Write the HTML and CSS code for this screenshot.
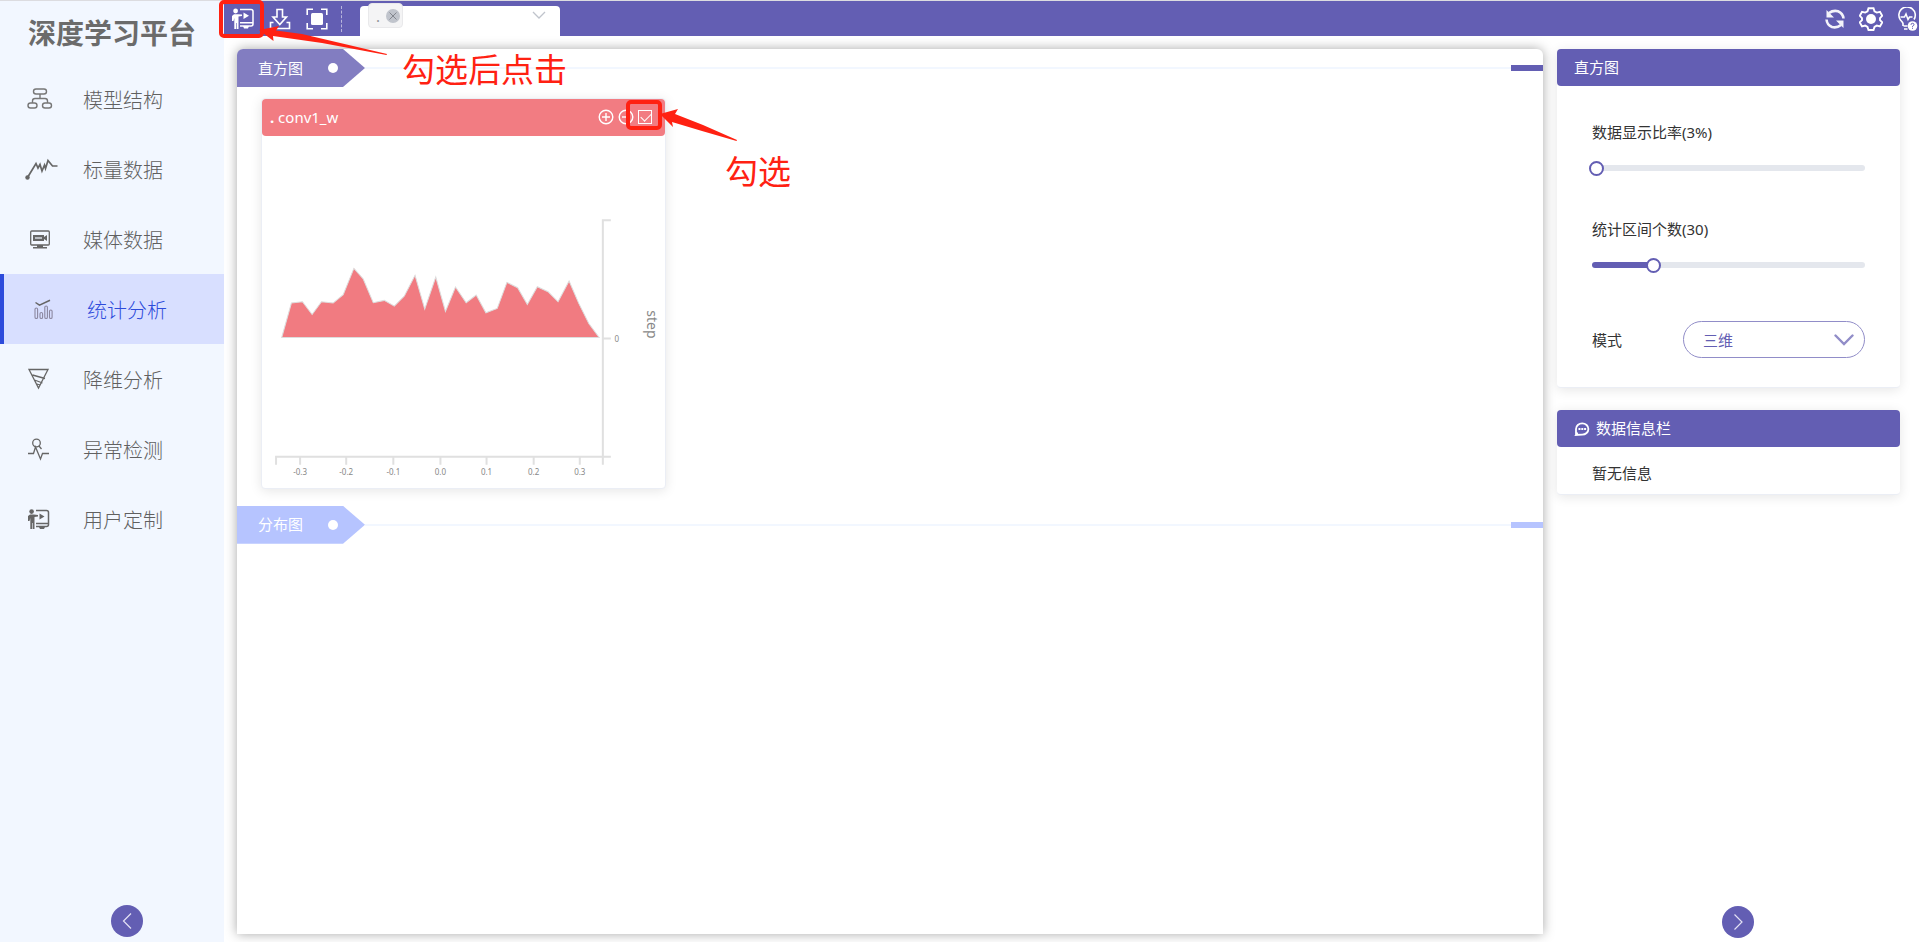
FILE: index.html
```html
<!DOCTYPE html>
<html lang="zh-CN">
<head>
<meta charset="utf-8">
<title>深度学习平台</title>
<link rel="stylesheet" href="styles.css">
</head>
<body>
<div class="app">
  <aside class="sidebar">
    <h1 class="logo">深度学习平台</h1>
    <nav class="menu">
      <a class="menu-item" href="#">
        <svg class="menu-icon" viewBox="0 0 34 24"><g fill="none" stroke="#777" stroke-width="1.4"><rect x="9.500" y="2" width="13" height="5" rx="2.500"/><rect x="4" y="16" width="9" height="5" rx="2.500"/><rect x="18.500" y="16" width="9" height="5" rx="2.500"/><path d="M16 7v4.500M8.500 16v-2q0-2.500 2.500-2.500h10q2.500 0 2.500 2.500v2"/></g></svg>
        <span>模型结构</span></a>
      <a class="menu-item" href="#">
        <svg class="menu-icon" viewBox="0 0 34 24"><circle cx="3.500" cy="20.500" r="2.200" fill="#666"/><path d="M3.500 20.500l8.500-14 2 4.500 2-3.500 2 6.500 2.500-6 1 3.500L24 3.500l4.500 5.500h5" fill="none" stroke="#666" stroke-width="1.700"/></svg>
        <span>标量数据</span></a>
      <a class="menu-item" href="#">
        <svg class="menu-icon" viewBox="0 0 34 24"><rect x="6.700" y="4" width="18.600" height="14" rx="1" fill="none" stroke="#666" stroke-width="1.300"/><path d="M9 8h11v2l3-2v6l-3-2v2H9zM13 18h6v2h4v1.500H9V20h4z" fill="#666"/><path d="M11 11h7" stroke="#f2f7ff" stroke-width="1.200"/></svg>
        <span>媒体数据</span></a>
      <a class="menu-item active" href="#">
        <svg class="menu-icon" viewBox="0 0 34 24"><g fill="none" stroke="#8b87a0" stroke-width="1.100"><rect x="7" y="11" width="2.600" height="10.500" rx="1.300"/><rect x="12" y="15.500" width="2.600" height="6" rx="1.300"/><rect x="16.800" y="9" width="2.600" height="12.500" rx="1.300"/><rect x="21.500" y="13" width="2.600" height="8.500" rx="1.300"/></g><path d="M7.500 5.500l4 2.700 10.500-5" fill="none" stroke="#666" stroke-width="1.500"/></svg>
        <span>统计分析</span></a>
      <a class="menu-item" href="#">
        <svg class="menu-icon" viewBox="0 0 34 24"><path d="M5 2.500h19L14.500 21zM8.500 8l12.500 3.500M10.500 13l8 3M13 17l3 1" fill="none" stroke="#666" stroke-width="1.300"/></svg>
        <span>降维分析</span></a>
      <a class="menu-item" href="#">
        <svg class="menu-icon" viewBox="0 0 34 24"><g fill="none" stroke="#666" stroke-width="1.300"><circle cx="12.500" cy="6" r="3.800"/><path d="M15 9l2.500 3M4 16.500h5.500l2-6.500 5 12 2-5.500H25"/></g></svg>
        <span>异常检测</span></a>
      <a class="menu-item" href="#">
        <svg class="menu-icon" viewBox="0 0 34 24"><g transform="translate(4 2)"><circle cx="3.600" cy="2.600" r="2.300" fill="#666"/><path d="M0 7l2-1.500h4L10 6v1.500L6.500 8v12H4.800v-6h-.6v6H2.300V9L1.500 12H0z" fill="#666"/><path d="M8 1.500h10.500q2 0 2 2v12q0 2-2 2H8M8 14.500h12" fill="none" stroke="#666" stroke-width="1.500"/><path d="M11.500 4.500l5 3-5 3zM11 18h6l-1 2h-4z" fill="#666"/></g></svg>
        <span>用户定制</span></a>
    </nav>
    <button class="round-btn" aria-label="收起菜单"><svg viewBox="0 0 32 32"><path d="M20 8.500L12.500 16l7.500 7.500"/></svg></button>
  </aside>

  <div class="workspace">
    <header class="topbar">
      <div class="tools">
        <button class="tool" aria-label="用户定制"><svg viewBox="0 0 22 22"><circle cx="3.600" cy="3" r="2.400" fill="#fff"/><path d="M0 8l2-1.800h4L10 6.500V8L6.500 8.500V21H4.800v-6h-.6v6H2.300V10L1.500 13H0z" fill="#fff"/><path d="M8 1.500h11q2 0 2 2v12.500q0 2-2 2H8M8 14.800h13" fill="none" stroke="#fff" stroke-width="1.500"/><path d="M11.500 4.500l5.500 3.300-5.500 3.300zM11 18h6l-1 2.500h-4z" fill="#fff"/></svg></button>
        <button class="tool" aria-label="下载"><svg viewBox="0 0 22 22"><g fill="none" stroke="#fff" stroke-width="1.600"><path d="M8 1.500h5.500V9h4L10.800 16.500 4 9h4zM4.500 14.500h-3v6h19v-6h-3"/></g></svg></button>
        <button class="tool" aria-label="全屏"><svg viewBox="0 0 22 22"><rect x="5" y="5" width="12" height="12" rx="1.500" fill="#fff"/><path d="M7 1.200H1.200V7M15 1.200h5.800V7M7 20.800H1.200V15M15 20.800h5.800V15" fill="none" stroke="#fff" stroke-width="1.600"/></svg></button>
      </div>
      <div class="run-select">
        <span class="tag">.<button class="tag-close" aria-label="移除"><svg viewBox="0 0 14 14"><path d="M3.500 3.500l7 7M10.500 3.500l-7 7"/></svg></button></span>
        <svg class="caret" viewBox="0 0 14 8"><path d="M1 1l6 6 6-6"/></svg>
      </div>
      <div class="actions">
        <button class="action" aria-label="刷新"><svg viewBox="0 0 24 24"><g fill="none" stroke="#f4f3fa" stroke-width="2.600"><path d="M6 6Q10 3 15 4.200q5 2 5.500 7.300"/><path d="M3.500 12.500q.5 5.500 5.500 7.500 5 1.200 9-2"/></g><path d="M3.500 3v7.500H11zM20.500 21v-7.500H13z" fill="#f4f3fa"/></svg></button>
        <button class="action" aria-label="设置"><svg viewBox="0 0 24 24"><path d="M9.500 1.200h5l1 3.100 2.300 1.300 3.200-.8 2.200 4-2.200 2.300v2l2.200 2.300-2.200 4-3.200-.8-2.300 1.300-1 3.100h-5l-1-3.100-2.300-1.300-3.200.8-2.200-4L3 13.100v-2L.8 8.800l2.200-4 3.200.8 2.300-1.300z" fill="none" stroke="#fff" stroke-width="1.900"/><circle cx="12" cy="12" r="5" fill="#fff"/></svg></button>
        <button class="action" aria-label="帮助"><svg viewBox="0 0 24 24"><path d="M8 19v-2.500Q7.500 15 5.500 13a8.200 8.200 0 1 1 13.500-.5M8.500 19h4M9 22h3.500" fill="none" stroke="#fff" stroke-width="1.600"/><path d="M5.500 10h4l1.500-3 2 5.500L14.500 10h3" fill="none" stroke="#fff" stroke-width="1.500"/><circle cx="17.500" cy="19" r="4.800" fill="#fff"/><path d="M16 17.800q0-1.500 1.500-1.500t1.500 1.400q0 .8-1.500 1.600v.8M17.500 20.800v1" fill="none" stroke="#635eb3" stroke-width="1"/></svg></button>
      </div>
    </header>

    <div class="content">
      <main class="board">
        <div class="section-head hist">
          <h2 class="ribbon"><span>直方图</span><i class="dot"></i></h2><i class="rule"></i><i class="end"></i>
        </div>
        <section class="chart-card">
          <div class="chart-head">
            <h3 class="chart-title"><b>.</b> conv1_w</h3>
            <div class="chart-tools">
              <button class="chart-btn" aria-label="放大"><svg viewBox="0 0 16 16"><circle cx="8" cy="8" r="6.800"/><path d="M4 8h8M8 4v8"/></svg></button>
              <button class="chart-btn" aria-label="缩小"><svg viewBox="0 0 16 16"><circle cx="8" cy="8" r="6.800"/><path d="M4 8h8"/></svg></button>
              <input class="pick" type="checkbox" checked aria-label="选择 conv1_w">
            </div>
          </div>
          <svg class="chart" viewBox="0 0 402 350" role="img" aria-label="conv1_w 直方图">
            <polygon transform="translate(-12 63) scale(.33333)" fill="#f17b81" stroke="#ddd" stroke-width="3" points="95,411 124,308 157,304 186,342 214,304 249,308 279,283 311,204 339,236 369,307 402,300 432,317 462,287 494,225 523,326 556,230 585,333 615,260 647,307 677,284 706,337 740,324 769,246 801,262 830,312 860,259 892,274 922,304 955,242 984,309 1014,369 1045,411"/>
            <g class="axis">
              <path d="M348 83h-8v244M340 201h8M14 327v-8h334M38 319v8M84 319v8M131 319v8M178 319v8M224 319v8M271 319v8M317 319v8"/>
            </g>
            <g class="ticks">
              <text x="38" y="337">-0.3</text><text x="84" y="337">-0.2</text><text x="131" y="337">-0.1</text><text x="178" y="337">0.0</text><text x="224" y="337">0.1</text><text x="271" y="337">0.2</text><text x="317" y="337">0.3</text><text x="354" y="204">0</text>
            </g>
            <text class="axis-name" transform="translate(384 187) rotate(90)">step</text>
          </svg>
        </section>
        <div class="section-head dist">
          <h2 class="ribbon"><span>分布图</span><i class="dot"></i></h2><i class="rule"></i><i class="end"></i>
        </div>
      </main>

      <aside class="panel">
        <section class="box">
          <h2 class="box-head"><span>直方图</span></h2>
          <form class="controls">
            <div class="field">
              <label for="ratio">数据显示比率(3%)</label>
              <input class="slider ratio" id="ratio" type="range" min="3" max="100" value="3">
            </div>
            <div class="field">
              <label for="bins">统计区间个数(30)</label>
              <input class="slider bins" id="bins" type="range" min="10" max="100" value="30">
            </div>
            <div class="mode">
              <label for="mode">模式</label>
              <div class="mode-select">
                <select id="mode"><option>三维</option><option>正交</option></select>
                <svg viewBox="0 0 20 12"><path d="M1.500 1.500L10 10l8.500-8.500"/></svg>
              </div>
            </div>
          </form>
        </section>
        <section class="box">
          <h2 class="box-head"><svg class="chat" viewBox="0 0 16 16"><path d="M2 14V8a6.200 5.600 0 1 1 6.200 5.600L2 14l1.500-2.500" fill="none" stroke="#fff" stroke-width="1.800"/><path d="M4.500 8h2M7.300 8h2M10.100 8h2" stroke="#fff" stroke-width="1.800"/></svg><span>数据信息栏</span></h2>
          <p class="info">暂无信息</p>
        </section>
        <button class="round-btn" aria-label="收起面板"><svg viewBox="0 0 32 32"><path d="M12.500 8.500L20 16l-7.500 7.500"/></svg></button>
      </aside>
    </div>
  </div>
</div>

<div class="guide">
  <svg class="guide-marks" viewBox="0 0 820 200">
    <g fill="none" stroke="#ff2112" stroke-width="4"><rect x="221" y="2" width="41" height="34" rx="3"/><rect x="628" y="102" width="32" height="26" rx="3"/></g>
    <g fill="#ff2112"><path d="M259 30l20-4-3 4.500 26 3.500 85 20-.5 1L322 43l-49-7 .5 5z"/><path d="M660 114l18-5-3 5 28 11 34 15-.5 1L702 131l-30-9 1 5z"/></g>
  </svg>
  <p class="note note-click">勾选后点击</p>
  <p class="note note-pick">勾选</p>
</div>
</body>
</html>
```
FILE: styles.css
```css
* { box-sizing: border-box; }

body {
  margin: 0;
  font-family: "Noto Sans", "Noto Sans CJK SC", sans-serif;
  font-size: 15px;
  color: #333;
  background: #fff;
}

h1, h2, h3, p { margin: 0; font-weight: 400; }
button { padding: 0; border: 0; background: none; cursor: pointer; }
svg { display: block; }

.app {
  display: grid;
  grid-template-columns: 224px 1fr;
  height: 100vh;
  border-top: 1px solid #dcdce0;
  overflow: hidden;
}

/* Sidebar */
.sidebar {
  display: flex;
  flex-direction: column;
  padding-bottom: 5px;
  background: #f2f7ff;
}
.logo {
  height: 63px;
  padding: 12px 0 0 28px;
  font-size: 28px;
  line-height: 40px;
  font-weight: 700;
  color: #6b6b6b;
  white-space: nowrap;
}
.menu-item {
  display: flex;
  align-items: center;
  gap: 25px;
  height: 70px;
  padding-left: 24px;
  font-size: 20px;
  font-weight: 300;
  color: #606060;
  text-decoration: none;
}
.menu-item.active {
  border-left: 4px solid #2d4bdb;
  background: #d8dfff;
  color: #2d4bdb;
}
.menu-icon { width: 34px; height: 24px; }

.round-btn {
  width: 32px;
  height: 32px;
  margin-top: auto;
  border-radius: 50%;
  background: #635eb3;
}
.round-btn path { fill: none; stroke: #e4e2f4; stroke-width: 1.2; }
.sidebar .round-btn { margin-left: 111px; }

/* Top bar */
.workspace { display: flex; flex-direction: column; min-width: 0; }
.topbar {
  display: flex;
  align-items: flex-end;
  height: 35px;
  background: #635eb3;
}
.tools {
  display: flex;
  align-items: center;
  gap: 15px;
  height: 35px;
  padding: 0 14px 0 8px;
}
.tools::after {
  content: "";
  height: 26px;
  margin-left: -2px;
  border-left: 1px dashed #b9b6dc;
}
.tool svg { width: 22px; height: 22px; }
.run-select {
  display: flex;
  justify-content: space-between;
  width: 200px;
  height: 30px;
  padding: 0 14px 0 8px;
  margin-left: 4px;
  border-radius: 4px 4px 0 0;
  background: #fff;
}
.tag {
  display: flex;
  align-items: center;
  justify-content: space-between;
  width: 35px;
  height: 25px;
  margin-top: -3px;
  padding: 0 2px 0 7px;
  border: 1px solid #e9e9eb;
  border-radius: 4px;
  background: #f4f4f5;
  color: #909399;
}
.tag-close { width: 14px; height: 14px; border-radius: 50%; background: #c0c4cc; }
.tag-close path { fill: none; stroke: #82868e; stroke-width: 1; }
.caret { width: 14px; height: 8px; margin-top: 5px; }
.caret path { fill: none; stroke: #c0c4cc; stroke-width: 1.3; }
.actions {
  display: flex;
  align-items: center;
  gap: 12px;
  height: 35px;
  margin-left: auto;
}
.action svg { width: 24px; height: 24px; }

/* Board */
.content { display: flex; flex: 1; gap: 14px; min-height: 0; padding: 13px 0 0 13px; }
.board {
  flex: 1;
  min-width: 0;
  margin-bottom: 8px;
  border-radius: 6px 6px 0 0;
  background: #fff;
  box-shadow: 0 0 12px rgba(0, 0, 0, .35);
}
.section-head { display: flex; align-items: center; height: 38px; }
.ribbon {
  display: flex;
  align-items: center;
  justify-content: space-between;
  width: 128px;
  height: 38px;
  padding: 0 27px 0 21px;
  font-size: 15px;
  color: #fff;
  clip-path: polygon(0 0, 106px 0, 100% 50%, 106px 100%, 0 100%);
}
.ribbon span, .box-head span, .chart-title { padding-bottom: 2px; }
.dot { width: 10px; height: 10px; border-radius: 50%; background: #fff; }
.rule { flex: 1; height: 2px; background: #f2f7ff; }
.end { width: 32px; height: 6px; }
.hist .ribbon { border-top-left-radius: 6px; background: #827dc1; }
.hist .end { background: #635eb3; }
.dist .ribbon, .dist .end { background: #b6c4ff; }

.chart-card {
  width: 405px;
  margin: 11px 0 17px 24px;
  border: 1px solid #ebeef5;
  border-radius: 4px;
  background: #fff;
  box-shadow: 0 2px 12px rgba(0, 0, 0, .1);
}
.chart-head {
  display: flex;
  align-items: center;
  justify-content: space-between;
  height: 37px;
  padding: 0 13px 0 8px;
  border-radius: 4px;
  background: #f27c82;
  color: #fff;
}
.chart-title { font-size: 15px; }
.chart-tools { display: flex; align-items: center; gap: 4px; padding-bottom: 2px; }
.chart-btn svg { width: 16px; height: 16px; }
.chart-btn circle, .chart-btn path { fill: none; stroke: #fff; stroke-width: 1.4; }
.pick {
  appearance: none;
  width: 14px;
  height: 14px;
  margin: 0;
  border: 1px solid #fff;
}
.pick:checked::before {
  content: "";
  display: block;
  width: 9px;
  height: 5px;
  margin: 2px 0 0 2px;
  border: solid #fff;
  border-width: 0 0 1px 1px;
  transform: rotate(-45deg);
}
.chart { width: 100%; padding-top: 1px; }
.axis path { fill: none; stroke: #e0e0e0; stroke-width: 2; }
.ticks text { font-size: 8px; fill: #888; text-anchor: middle; }
.axis-name { font-size: 14px; fill: #888; text-anchor: middle; }

/* Right panel */
.panel {
  display: flex;
  flex-direction: column;
  align-items: center;
  width: 362px;
  padding-bottom: 4px;
}
.box {
  align-self: stretch;
  margin: 0 19px 22px 0;
  border: solid #ebeef5;
  border-width: 0 0 1px;
  border-radius: 4px;
  background: #fff;
  box-shadow: 0 2px 12px rgba(0, 0, 0, .1);
}
.box-head {
  display: flex;
  align-items: center;
  gap: 6px;
  height: 37px;
  padding-left: 17px;
  border-radius: 4px;
  font-size: 15px;
  background: #635eb3;
  color: #fff;
}
.chat { width: 16px; height: 16px; }
.controls { padding: 34px 35px 29px; }
.field { height: 97px; }
.field label { display: block; line-height: 24px; }
.slider {
  appearance: none;
  display: block;
  width: 100%;
  height: 16px;
  margin: 16px 0 0;
  background: none;
}
.slider::-webkit-slider-runnable-track { height: 6px; border-radius: 3px; background: #e4e7ed; }
.bins::-webkit-slider-runnable-track { background: linear-gradient(to right, #635eb3 22%, #e4e7ed 22%); }
.slider::-webkit-slider-thumb {
  appearance: none;
  width: 15px;
  height: 15px;
  margin-top: -4px;
  border: 2px solid #635eb3;
  border-radius: 50%;
  background: #fff;
  transform: translateX(-3px);
}
.mode { display: flex; align-items: center; justify-content: space-between; padding-top: 7px; }
.mode-select { position: relative; width: 182px; }
.mode-select select {
  appearance: none;
  width: 100%;
  height: 37px;
  padding: 0 19px;
  border: 1px solid #918dc8;
  border-radius: 19px;
  background: #fff;
  font: inherit;
  color: #635eb3;
}
.mode-select svg {
  position: absolute;
  right: 11px;
  top: 13px;
  width: 20px;
  height: 12px;
  pointer-events: none;
}
.mode-select path { fill: none; stroke: #918dc8; stroke-width: 2.4; stroke-linecap: round; }
.info { padding: 15px 35px 9px; line-height: 23px; }

/* Walkthrough marks over the page */
.guide { position: absolute; left: 0; top: 0; pointer-events: none; }
.guide-marks { width: 820px; height: 200px; }
.note {
  position: absolute;
  font-size: 33px;
  line-height: 40px;
  white-space: nowrap;
  color: #ff2112;
}
.note-click { left: 402px; top: 50px; }
.note-pick { left: 725px; top: 152px; }
```
